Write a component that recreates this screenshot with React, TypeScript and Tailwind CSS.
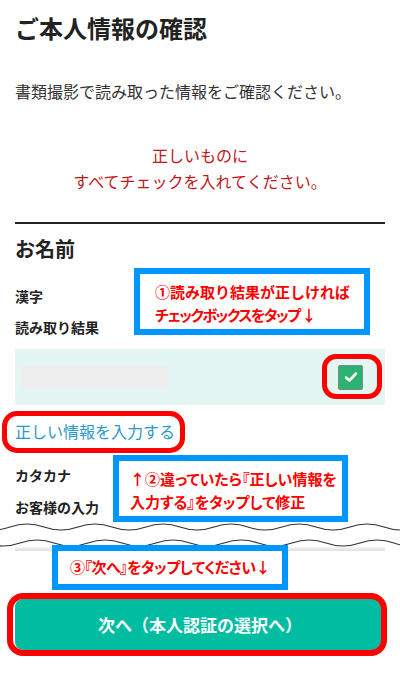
import React from "react";

function wavePath(yc: number, amp: number, period: number, width: number, phase: number) {
  const half = period / 2;
  let d = `M${-period + phase},${yc}`;
  let x = -period + phase;
  let up = true;
  while (x < width + period) {
    const cx = x + half / 2;
    const cy = up ? yc - amp * 2 : yc + amp * 2;
    d += ` Q${cx},${cy} ${x + half},${yc}`;
    x += half;
    up = !up;
  }
  return d;
}

export default function App() {
  const font = { fontFamily: '"Noto Sans CJK JP", "Noto Sans", sans-serif' };
  return (
    <div className="relative w-[400px] h-[673px] overflow-hidden bg-white" style={font}>
      <div className="flex flex-col px-[15px]">
        <h1 className="pt-[12px] text-[24px] leading-[32px] font-bold text-[#222]">ご本人情報の確認</h1>
        <p className="mt-[35px] text-[16px] leading-[24px] text-[#333]">書類撮影で読み取った情報をご確認ください。</p>
        <p className="mt-[39px] text-center text-[16px] leading-[26px] text-[#c0171c]">
          正しいものに
          <br />
          すべてチェックを入れてください。
        </p>
        <div className="mt-[28px] h-[2px] bg-[#222]" />
        <h2 className="mt-[11px] text-[20px] leading-[28px] font-bold text-[#222]">お名前</h2>
        <div className="mt-[23px] text-[14px] leading-[20px] font-bold text-[#222]">漢字</div>
        <div className="mt-[11px] text-[14px] leading-[20px] font-bold text-[#222]">読み取り結果</div>
        <div className="mt-[12px] flex h-[56px] items-center justify-between bg-[#e4f6f4] pl-[7px] pr-[22px]">
          <div className="h-[23px] w-[146px] bg-[#eeeeee]" />
          <div className="flex h-[25px] w-[25px] items-center justify-center rounded-[2px] border border-[#7d8a84] bg-[#2bb471]">
            <svg width="14" height="12" viewBox="0 0 14 12">
              <polyline points="2,6.5 5.5,9.5 12,2.5" fill="none" stroke="#fff" strokeWidth="2.6" strokeLinecap="round" strokeLinejoin="round" />
            </svg>
          </div>
        </div>
        <div className="mt-[14px] text-[16px] leading-[24px] text-[#2a98cc]">正しい情報を入力する</div>
        <div className="mt-[22px] text-[14px] leading-[20px] font-bold text-[#222]">カタカナ</div>
        <div className="mt-[12px] text-[14px] leading-[20px] font-bold text-[#222]">お客様の入力</div>
        <svg className="-mx-[15px] mt-[3px] block h-[27px] w-[400px]" viewBox="0 0 400 27">
          <path d={wavePath(7, 3, 68, 400, 10)} fill="none" stroke="#333" strokeWidth="1.2" />
          <path d={wavePath(23, 3, 68, 400, 20)} fill="none" stroke="#333" strokeWidth="1.2" />
        </svg>
        <div className="h-[4px] bg-gradient-to-b from-[#f6f6f6] to-[#dedede]" />
        <button className="mt-[48px] flex h-[51px] items-center justify-center rounded-[8px] bg-[#00bda2] text-[17px] font-bold text-white">
          次へ（本人認証の選択へ）
        </button>
      </div>

      {/* annotations */}
      <div className="absolute left-[134px] top-[268px] h-[67px] w-[236px] border-[6px] border-[#0096ff] bg-white pl-[15px] pt-[6px] text-[15px] leading-[23px] font-bold text-[#ff0000]">
        <div className="whitespace-nowrap">①読み取り結果が正しければ</div>
        <div className="whitespace-nowrap tracking-[-1.5px] [font-feature-settings:'palt']">チェックボックスをタップ ↓</div>
      </div>
      <div className="absolute left-[113px] top-[455px] h-[67px] w-[235px] border-[6px] border-[#0096ff] bg-white pl-[11px] pt-[6px] text-[15px] leading-[23px] font-bold text-[#ff0000] [font-feature-settings:'palt']">
        <div className="whitespace-nowrap">↑②違っていたら『正しい情報を</div>
        <div className="whitespace-nowrap">入力する』をタップして修正</div>
      </div>
      <div className="absolute left-[52px] top-[545px] flex h-[45px] w-[236px] items-center justify-center border-[6px] border-[#0096ff] bg-white text-[15px] font-bold tracking-[-0.5px] text-[#ff0000] [font-feature-settings:'palt']">
        <span className="whitespace-nowrap">③『次へ』をタップしてください↓</span>
      </div>

      <div className="absolute left-[322px] top-[354px] h-[45px] w-[60px] rounded-[14px] border-[5px] border-[#ff0000]" />
      <div className="absolute left-[2px] top-[411px] h-[42px] w-[183px] rounded-[15px] border-[5px] border-[#ff0000]" />
      <div className="absolute left-[7px] top-[593px] h-[63px] w-[380px] rounded-[16px] border-[6px] border-[#ff0000]" />
    </div>
  );
}
